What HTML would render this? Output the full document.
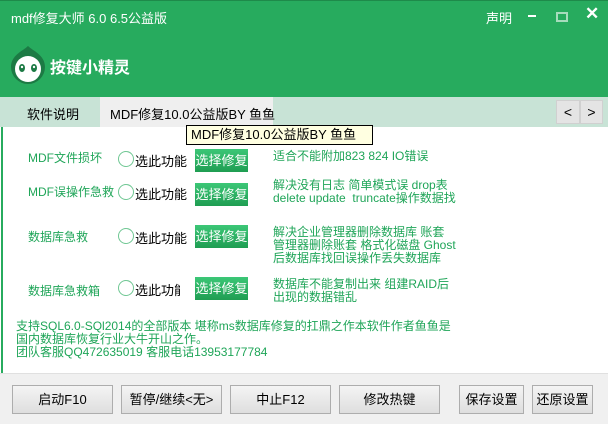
<!DOCTYPE html>
<html><head><meta charset="utf-8"><style>
*{margin:0;padding:0;box-sizing:border-box}
body{width:608px;height:424px;overflow:hidden;position:relative;background:#fff;font-family:"Liberation Sans","Noto Sans CJK SC",sans-serif;font-size:12px}
.a{position:absolute;white-space:nowrap}
.g{color:#1fa558}
.btn{position:absolute;top:149px;width:53px;height:23px;background:linear-gradient(#3cc777,#1f9d52);color:#fff;font-size:13px;line-height:23px;text-align:center}
.rad{position:absolute;width:16px;height:16px;border:1.5px solid #6fc793;border-radius:50%;background:#fff}
.fb{position:absolute;top:385px;height:29px;border:1px solid #adadad;background:linear-gradient(#f4f4f4,#dedede);text-align:center;line-height:27px;font-size:13px;color:#000}
</style></head><body>
<div class="a" style="left:0;top:0;width:608px;height:97px;background:#27ab5e;border-top:1px solid #1e8a4a"></div>
<div class="a" style="left:11px;top:8px;color:#fff;font-size:13px">mdf修复大师 6.0 6.5公益版</div>
<div class="a" style="left:486px;top:8px;color:#fff;font-size:13px">声明</div>
<div class="a" style="left:528px;top:15px;width:8px;height:2px;background:#fff"></div>
<div class="a" style="left:556px;top:12px;width:12px;height:10px;border:2px solid #a6dcbc"></div>
<div class="a" style="left:585px;top:4px;color:#fff;font-size:17px;font-weight:bold">✕</div>
<svg class="a" style="left:9px;top:45px" width="38" height="40" viewBox="0 0 38 40">
<path d="M19 1 C24 6 36 10 36 22 A17 17 0 0 1 2 22 C2 10 14 6 19 1Z" fill="#1c7a44"/>
<circle cx="19" cy="24" r="13" fill="#fff"/>
<ellipse cx="13" cy="23" rx="3" ry="4" fill="#1c7a44"/><ellipse cx="25" cy="23" rx="3" ry="4" fill="#1c7a44"/>
<circle cx="13" cy="22" r="1.2" fill="#fff"/><circle cx="25" cy="22" r="1.2" fill="#fff"/>
</svg>
<div class="a" style="left:50px;top:54px;color:#fff;font-size:16px;font-weight:bold">按键小精灵</div>
<div class="a" style="left:0;top:97px;width:608px;height:30px;background:#c8e3d6"></div>
<div class="a" style="left:27px;top:104px;font-size:13px">软件说明</div>
<div class="a" style="left:100px;top:97px;width:173px;height:30px;background:#efefef"></div>
<div class="a" style="left:110px;top:104px;font-size:13px">MDF修复10.0公益版BY 鱼鱼</div>
<div class="a" style="left:556px;top:100px;width:24px;height:24px;background:#e4e4e4;border:1px solid #d0d0d0;text-align:center;line-height:22px;font-size:14px">&lt;</div>
<div class="a" style="left:580px;top:100px;width:23px;height:24px;background:#e4e4e4;border:1px solid #d0d0d0;text-align:center;line-height:22px;font-size:14px">&gt;</div>
<div class="a" style="left:1px;top:127px;width:2px;height:246px;background:#27ab5e"></div>

<div class="a g" style="left:28px;top:149px;font-size:12px">MDF文件损坏</div>
<div class="a g" style="left:28px;top:183px;font-size:12px">MDF误操作急救</div>
<div class="a g" style="left:28px;top:228px;font-size:12px">数据库急救</div>
<div class="a g" style="left:28px;top:282px;font-size:12px">数据库急救箱</div>
<div class="rad" style="left:118px;top:151px"></div>
<div class="rad" style="left:118px;top:184px"></div>
<div class="rad" style="left:118px;top:228px"></div>
<div class="rad" style="left:118px;top:280px"></div>
<div class="a" style="left:135px;top:151px;font-size:13px">选此功能</div>
<div class="a" style="left:135px;top:184px;font-size:13px">选此功能</div>
<div class="a" style="left:135px;top:228px;font-size:13px">选此功能</div>
<div class="a" style="left:135px;top:280px;font-size:13px;width:45px;overflow:hidden">选此功能</div>
<div class="btn" style="left:195px;top:149px">选择修复</div>
<div class="btn" style="left:195px;top:183px">选择修复</div>
<div class="btn" style="left:195px;top:225px">选择修复</div>
<div class="btn" style="left:195px;top:277px">选择修复</div>
<div class="a g" style="left:273px;top:149px;line-height:14px">适合不能附加823 824 IO错误</div>
<div class="a g" style="left:273px;top:179px;line-height:13px">解决没有日志 简单模式误 drop表<br>delete update&nbsp; truncate操作数据找</div>
<div class="a g" style="left:273px;top:226px;line-height:13px">解决企业管理器删除数据库 账套<br>管理器删除账套 格式化磁盘 Ghost<br>后数据库找回误操作丢失数据库</div>
<div class="a g" style="left:273px;top:278px;line-height:13px">数据库不能复制出来 组建RAID后<br>出现的数据错乱</div>
<div class="a g" style="left:16px;top:320px;line-height:13px">支持SQL6.0-SQl2014的全部版本 堪称ms数据库修复的扛鼎之作本软件作者鱼鱼是<br>国内数据库恢复行业大牛开山之作。<br>团队客服QQ472635019 客服电话13953177784</div>
<div class="a" style="left:186px;top:125px;width:187px;height:20px;background:#ffffe1;border:1px solid #000;font-size:13px;line-height:18px;padding-left:4px">MDF修复10.0公益版BY 鱼鱼</div>

<div class="a" style="left:0;top:373px;width:608px;height:51px;background:#f0f0f0;border-top:1px solid #e0e0e0"></div>
<div class="fb" style="left:12px;width:101px">启动F10</div>
<div class="fb" style="left:121px;width:101px">暂停/继续&lt;无&gt;</div>
<div class="fb" style="left:230px;width:101px">中止F12</div>
<div class="fb" style="left:339px;width:101px">修改热键</div>
<div class="fb" style="left:459px;width:65px">保存设置</div>
<div class="fb" style="left:532px;width:61px">还原设置</div>
</body></html>
